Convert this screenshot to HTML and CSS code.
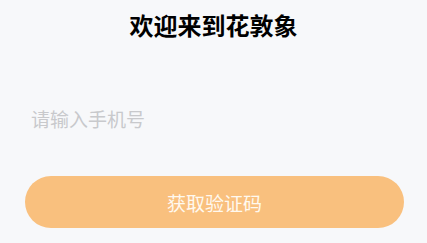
FILE: index.html
```html
<!DOCTYPE html>
<html lang="zh-CN">
<head>
<meta charset="utf-8">
<link rel="stylesheet" href="styles.css">
</head>
<body>
<div class="page">
  <h1 class="title">欢迎来到花敦象</h1>
  <div class="field">
    <input class="phone" type="tel" placeholder="请输入手机号">
  </div>
  <button class="submit" type="button">获取验证码</button>
</div>
</body>
</html>
```

FILE: styles.css
```css
html, body {
  margin: 0;
  padding: 0;
  background: #f7f8fa;
}
body {
  font-family: "Noto Sans CJK SC", "Noto Sans", sans-serif;
}
.page {
  display: flex;
  flex-direction: column;
  padding-top: 10px;
}
.title {
  margin: 0;
  font-size: 24px;
  line-height: 30px;
  font-weight: 700;
  color: #000;
  text-align: center;
}
.field {
  margin-top: 53px;
  height: 50px;
  display: flex;
  align-items: center;
  padding: 0 31px;
}
.phone {
  flex: 1;
  border: 0;
  outline: 0;
  background: transparent;
  font-family: inherit;
  font-size: 19px;
  padding: 0;
  color: #323233;
}
.phone::placeholder {
  color: #c8c9cc;
}
.submit {
  margin: 33px 23px 0 25px;
  height: 52px;
  border: 0;
  border-radius: 26px;
  background: #f9c07e;
  color: #fff9ef;
  font-family: inherit;
  font-size: 19px;
  padding: 0;
}
```
